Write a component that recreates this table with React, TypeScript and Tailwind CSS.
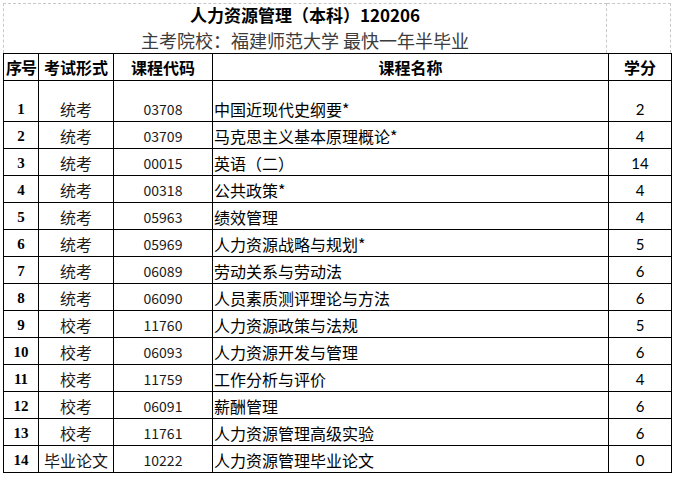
import React from 'react';

interface Course {
  no: number;
  type: string;
  code: string;
  name: string;
  credit: number;
}

const courses: Course[] = [
  { no: 1, type: '统考', code: '03708', name: '中国近现代史纲要*', credit: 2 },
  { no: 2, type: '统考', code: '03709', name: '马克思主义基本原理概论*', credit: 4 },
  { no: 3, type: '统考', code: '00015', name: '英语（二）', credit: 14 },
  { no: 4, type: '统考', code: '00318', name: '公共政策*', credit: 4 },
  { no: 5, type: '统考', code: '05963', name: '绩效管理', credit: 4 },
  { no: 6, type: '统考', code: '05969', name: '人力资源战略与规划*', credit: 5 },
  { no: 7, type: '统考', code: '06089', name: '劳动关系与劳动法', credit: 6 },
  { no: 8, type: '统考', code: '06090', name: '人员素质测评理论与方法', credit: 6 },
  { no: 9, type: '校考', code: '11760', name: '人力资源政策与法规', credit: 5 },
  { no: 10, type: '校考', code: '06093', name: '人力资源开发与管理', credit: 6 },
  { no: 11, type: '校考', code: '11759', name: '工作分析与评价', credit: 4 },
  { no: 12, type: '校考', code: '06091', name: '薪酬管理', credit: 6 },
  { no: 13, type: '校考', code: '11761', name: '人力资源管理高级实验', credit: 6 },
  { no: 14, type: '毕业论文', code: '10222', name: '人力资源管理毕业论文', credit: 0 },
];

const cjk = "font-['Noto_Sans_CJK_SC',sans-serif]";

export default function App() {
  return (
    <div className="w-[673px] h-[478px] bg-white overflow-hidden pl-[3px] pt-[3px] text-black">
      {/* Title area (sheet gridlines are dashed) */}
      <div className="flex h-[50px]">
        <div className={`w-[604px] border-t border-l border-r border-dashed border-[#c8c8c8] flex flex-col items-center ${cjk}`}>
          <div className="text-[17px] font-bold leading-[22px]">人力资源管理（本科）120206</div>
          <div className="text-[18px] leading-[22px] text-[#3c3c3c] mt-[3px]">主考院校：福建师范大学 最快一年半毕业</div>
        </div>
        <div className="w-[64px] border-t border-r border-dashed border-[#c8c8c8]" />
      </div>

      <table className="table-fixed border-collapse w-[668px]">
        <colgroup>
          <col className="w-[35px]" />
          <col className="w-[75px]" />
          <col className="w-[99px]" />
          <col className="w-[396px]" />
          <col className="w-[63px]" />
        </colgroup>
        <thead>
          <tr className={`h-[27px] text-[16px] font-bold ${cjk}`}>
            <th className="border border-black p-0 leading-[20px] tracking-[-1px]">序号</th>
            <th className="border border-black p-0 leading-[20px]">考试形式</th>
            <th className="border border-black p-0 leading-[20px]">课程代码</th>
            <th className="border border-black p-0 leading-[20px]">课程名称</th>
            <th className="border border-black p-0 leading-[20px]">学分</th>
          </tr>
        </thead>
        <tbody>
          {courses.map((c) => (
            <tr key={c.no} className={c.no === 1 ? 'h-[41px]' : 'h-[27px]'}>
              <td className="border border-black p-0 pb-[2px] align-bottom text-center font-['Liberation_Serif',serif] font-bold text-[15px] leading-[20px]">
                {c.no}
              </td>
              <td className={`border border-black p-0 pb-[2px] align-bottom text-center text-[16px] leading-[20px] text-[#1a1a1a] ${cjk}`}>
                {c.type}
              </td>
              <td className={`border border-black p-0 pb-[2px] align-bottom text-center text-[14px] leading-[20px] text-[#1a1a1a] ${cjk}`}>
                {c.code}
              </td>
              <td className={`border border-black p-0 pl-[1px] pb-[2px] align-bottom text-left text-[16px] leading-[20px] ${cjk}`}>
                {c.name}
              </td>
              <td className="border border-black p-0 pb-[2px] align-bottom text-center font-['Lato',sans-serif] text-[15px] leading-[20px]">
                {c.credit}
              </td>
            </tr>
          ))}
        </tbody>
      </table>
    </div>
  );
}
